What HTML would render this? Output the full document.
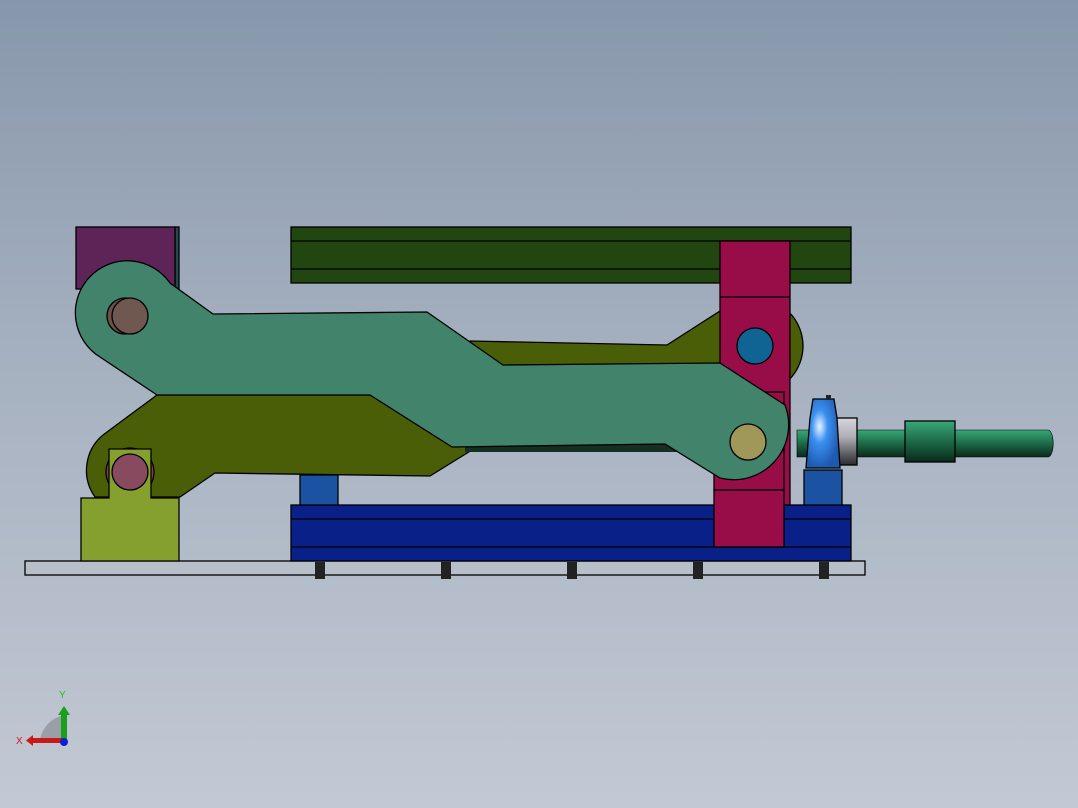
<!DOCTYPE html>
<html><head><meta charset="utf-8"><style>
html,body{margin:0;padding:0;width:1078px;height:808px;overflow:hidden}
body{background:linear-gradient(#8797ab,#a6b1c0 45%,#c3c9d4)}
svg{position:absolute;left:0;top:0}
</style></head><body>
<svg width="1078" height="808" viewBox="0 0 1078 808" stroke="#000" stroke-width="1.3">
<defs>
<linearGradient id="sh" x1="0" y1="0" x2="0" y2="1"><stop offset="0" stop-color="#3aa878"/><stop offset="0.5" stop-color="#1c6a48"/><stop offset="1" stop-color="#0a2a1a"/></linearGradient>
<radialGradient id="bb" cx="0.4" cy="0.4" r="0.6"><stop offset="0" stop-color="#e8f4ff"/><stop offset="0.4" stop-color="#3a90f0"/><stop offset="1" stop-color="#1e5ab0"/></radialGradient>
<linearGradient id="ring" x1="0" y1="0" x2="0" y2="1"><stop offset="0" stop-color="#d8d6dc"/><stop offset="0.4" stop-color="#b0aeb6"/><stop offset="1" stop-color="#2a2a30"/></linearGradient>
</defs>
<rect x="25" y="561" width="840" height="14" fill="#b8bfc9"/>
<g fill="#222" stroke="none">
<rect x="315" y="562" width="10" height="17"/><rect x="441" y="562" width="10" height="17"/><rect x="567" y="562" width="10" height="17"/><rect x="693" y="562" width="10" height="17"/><rect x="819" y="562" width="10" height="17"/>
</g>
<rect x="291" y="505" width="560" height="56" fill="#0a2089"/>
<line x1="291" y1="519" x2="851" y2="519"/><line x1="291" y1="547" x2="851" y2="547"/>
<rect x="300" y="475" width="38" height="30" fill="#1c52a2"/>
<rect x="804" y="470" width="38" height="35" fill="#1c52a2"/>
<rect x="291" y="227" width="560" height="56" fill="#22460f"/>
<line x1="291" y1="241" x2="851" y2="241"/><line x1="291" y1="269" x2="851" y2="269"/>
<rect x="175" y="227" width="4" height="62" fill="#244a50"/>
<rect x="76" y="227" width="99" height="62" fill="#5e2457"/>
<circle cx="755" cy="346" r="48" fill="#4a5e08"/>
<path d="M103,435 L157,395 L420,395 L470,341 L667,345 L720,311 L770,330 L770,420 L700,440 L472,450 L430,476 L215,473 L180,497 L95,497 A46,46 0 0 1 103,435 Z" fill="#4a5e08"/>
<rect x="465" y="443" width="220" height="9" fill="#143022" stroke="none"/>
<rect x="720" y="241" width="70" height="264" fill="#980c48"/>
<line x1="720" y1="297" x2="790" y2="297"/>
<rect x="714" y="392" width="70" height="98" fill="#980c48"/>
<rect x="714" y="490" width="70" height="57" fill="#980c48"/>
<circle cx="755" cy="346" r="18" fill="#106494"/>
<path d="M157,395 L100,357 A52,52 0 1 1 170,283 L213,314 L427,312 L503,365 L720,363 L785,405 A55,55 0 0 1 720,478 L665,444 L452,447 L370,395 Z" fill="#41836b"/>
<circle cx="125" cy="316" r="18" fill="#6a5048"/>
<circle cx="130" cy="316" r="18" fill="#6e5850"/>
<circle cx="748" cy="442" r="18" fill="#a09858"/>
<circle cx="130" cy="472" r="24" fill="#7a3e55"/>
<path d="M81,498 L109,498 L109,449 L151,449 L151,498 L179,498 L179,561 L81,561 Z" fill="#86a030"/>
<circle cx="130" cy="472" r="18" fill="#874a5e"/>
<path d="M797,430 L1048,430 A5,13 0 0 1 1048,457 L797,457 Z" fill="url(#sh)" stroke-width="0.6"/>
<rect x="905" y="421" width="50" height="41" fill="url(#sh)"/>
<rect x="836" y="418" width="21" height="47" fill="url(#ring)"/>
<path d="M813,399 L834,399 L837,418 L840,468 L806,468 L810,418 Z" fill="url(#bb)"/>
<rect x="826" y="395" width="5" height="4" fill="#222" stroke="none"/>
</svg>
<svg width="80" height="80" viewBox="0 0 80 80" style="left:10px;top:680px">
<path d="M30,60 A30,30 0 0 1 55,35 L55,60 Z" fill="#9a9ea6"/>
<rect x="51" y="33" width="6" height="28" fill="#18a018"/>
<path d="M48,35 L54,26 L60,35 Z" fill="#18a018"/>
<rect x="22" y="58" width="33" height="5" fill="#c81818"/>
<path d="M23,55 L16,60.5 L23,66 Z" fill="#c81818"/>
<circle cx="54" cy="62" r="4" fill="#1020d0"/>
<text x="49" y="18" font-family="Liberation Sans,sans-serif" font-size="10" fill="#20c020">Y</text>
<text x="6" y="64" font-family="Liberation Sans,sans-serif" font-size="10" fill="#d01818">X</text>
</svg>
</body></html>
